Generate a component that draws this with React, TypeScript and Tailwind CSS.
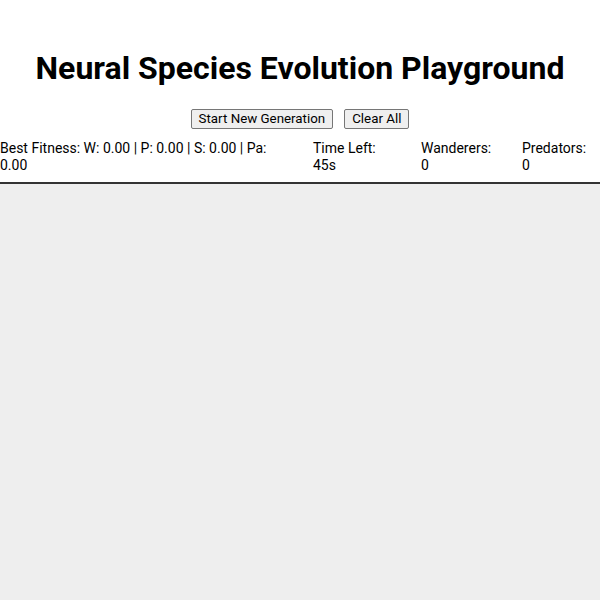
export default function App() {
  return (
    <div className="min-h-screen bg-white font-['Roboto',sans-serif] text-black flex flex-col">
      <h1 className="text-center text-[32px] font-bold leading-[37px] mt-[50px] mb-[22px]">
        Neural Species Evolution Playground
      </h1>
      <div className="flex justify-center gap-[11px]">
        <button className="h-[20px] px-[7px] text-[13.33px] leading-[18px] bg-[#efefef] border border-[#767676] rounded-[2px]">
          Start New Generation
        </button>
        <button className="h-[20px] px-[7px] text-[13.33px] leading-[18px] bg-[#efefef] border border-[#767676] rounded-[2px]">
          Clear All
        </button>
      </div>
      <div className="flex text-[14px] leading-[17px] mt-[11px] pb-[8px] border-b-2 border-[#333] whitespace-nowrap overflow-hidden">
        <div className="w-[313px] shrink-0 whitespace-normal pr-[40px]">
          Best Fitness: W: 0.00 | P: 0.00 | S: 0.00 | Pa: 0.00
        </div>
        <div className="w-[108px] shrink-0">
          Time Left:
          <br />
          45s
        </div>
        <div className="w-[101px] shrink-0">
          Wanderers:
          <br />0
        </div>
        <div className="w-[101px] shrink-0">
          Predators:
          <br />0
        </div>
      </div>
      <div className="flex-1 bg-[#eeeeee]" />
    </div>
  );
}
